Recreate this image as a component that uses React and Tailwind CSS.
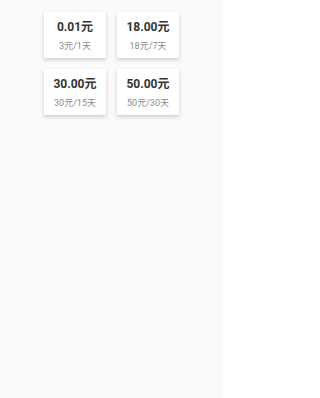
const plans = [
  { price: "0.01元", desc: "3元/1天" },
  { price: "18.00元", desc: "18元/7天" },
  { price: "30.00元", desc: "30元/15天" },
  { price: "50.00元", desc: "50元/30天" },
];

export default function App() {
  return (
    <div
      className="min-h-[398px] w-[223px] bg-[#fafafa] pt-[12px]"
      style={{ fontFamily: 'Roboto, "Noto Sans CJK SC", sans-serif' }}
    >
      <div className="mx-auto grid w-[135px] grid-cols-2 gap-x-[11px] gap-y-[11px]">
        {plans.map((p) => (
          <div
            key={p.price}
            className="flex h-[46px] flex-col items-center justify-center bg-white shadow-[0_2px_4px_rgba(0,0,0,0.18)]"
          >
            <div className="text-[12px] font-bold leading-[16px] text-[#333]">
              {p.price}
            </div>
            <div className="mt-[5px] text-[9px] leading-[12px] text-[#8a8a8a]">
              {p.desc}
            </div>
          </div>
        ))}
      </div>
    </div>
  );
}
